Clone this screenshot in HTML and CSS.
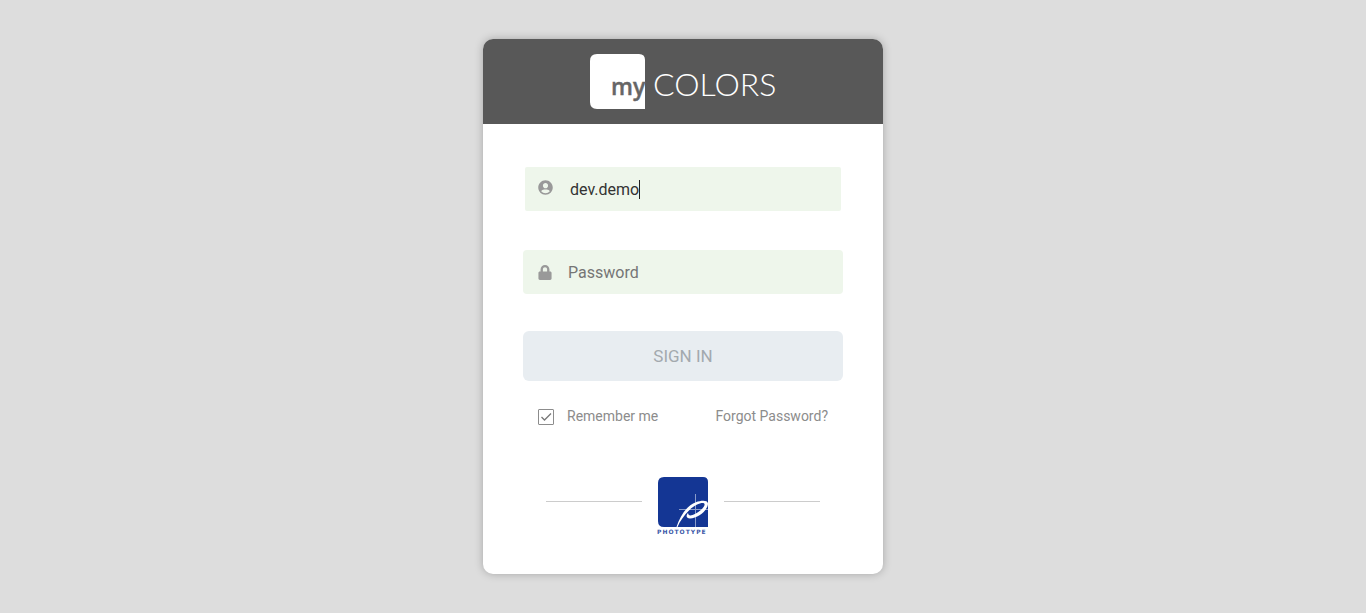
FILE: index.html
```html
<!DOCTYPE html>
<html lang="en">
<head>
<meta charset="utf-8">
<meta name="viewport" content="width=device-width, initial-scale=1">
<title>myColors</title>
<link rel="stylesheet" href="styles.css">
</head>
<body>
<main class="card">
  <header class="card-header">
    <svg class="brand" viewBox="0 0 187 56" role="img" aria-label="my COLORS">
      <path d="M7 0H49Q55 0 55 6V55H7Q0 55 0 48V7Q0 0 7 0Z" fill="#fff"/>
      <text class="brand-my" x="21" y="41">my</text>
      <text class="brand-colors" x="63" y="42">COLORS</text>
    </svg>
  </header>
  <form class="card-body">
    <div class="field field-active">
      <label class="field-icon" for="username" aria-label="Username">
        <svg width="15" height="15" viewBox="0 0 496 512"><path fill="currentColor" d="M248 8C111 8 0 119 0 256s111 248 248 248 248-111 248-248S385 8 248 8zm0 96c48.600 0 88 39.400 88 88s-39.400 88-88 88-88-39.400-88-88 39.400-88 88-88zm0 344c-58.700 0-111.300-26.600-146.500-68.200 18.800-35.400 55.600-59.800 98.500-59.800 2.400 0 4.800.4 7.100 1.100 13 4.200 26.600 6.900 40.900 6.900s28-2.700 40.900-6.900c2.300-.7 4.700-1.100 7.100-1.100 42.900 0 79.700 24.400 98.500 59.800C359.300 421.400 306.700 448 248 448z"/></svg>
      </label>
      <input class="field-input field-input-fit" id="username" type="text" value="dev.demo" autocomplete="off">
      <span class="caret"></span>
    </div>
    <div class="field">
      <label class="field-icon" for="password" aria-label="Password">
        <svg width="14" height="15" viewBox="0 0 448 512"><path fill="currentColor" d="M400 224h-24v-72C376 68.200 307.800 0 224 0S72 68.200 72 152v72H48c-26.500 0-48 21.500-48 48v192c0 26.500 21.500 48 48 48h352c26.500 0 48-21.500 48-48V272c0-26.500-21.500-48-48-48zm-104 0H152v-72c0-39.700 32.300-72 72-72s72 32.300 72 72v72z"/></svg>
      </label>
      <input class="field-input" id="password" type="password" placeholder="Password">
    </div>
    <button class="sign-in" type="submit" disabled>SIGN IN</button>
    <div class="options">
      <label class="remember"><input class="checkbox" type="checkbox" checked>Remember me</label>
      <a class="forgot" href="#">Forgot Password?</a>
    </div>
    <div class="company">
      <svg class="company-logo" viewBox="0 0 50 58" role="img" aria-label="Phototype">
        <path d="M6 0H45Q50 0 50 5V50H6Q0 50 0 44V6Q0 0 6 0Z" fill="#143694"/>
        <path d="M37.500 17V50M21 32.500H50" stroke="#8a9cca" stroke-width="1"/>
        <path d="M18.500 50C22 39 29 28 38 25.200C43 23.400 49.500 22.800 50 26.500C50 33 40 41.500 32 41.500C28.500 41.500 27.500 39 30 36C30.500 38.500 32 39 34.500 38C40.500 36 47.500 30 46.500 27C45.500 24.500 37 27.500 31 33.500C26 38.500 22 44 19.500 50Z" fill="#fff"/>
        <text class="company-name" x="-1" y="57">PHOTOTYPE</text>
      </svg>
    </div>
  </form>
</main>
</body>
</html>
```
FILE: styles.css
```css
* {
  box-sizing: border-box;
}

body {
  margin: 0;
  min-height: 100vh;
  display: flex;
  align-items: center;
  justify-content: center;
  background: #ddd;
  font-family: Roboto, "Liberation Sans", sans-serif;
  color: #8c8c8c;
}

.card {
  width: 100%;
  max-width: 400px;
  background: #fff;
  border-radius: 10px;
  box-shadow: 0 0 8px rgba(0, 0, 0, 0.25);
  overflow: hidden;
}

.card-header {
  display: flex;
  justify-content: center;
  padding: 15px 0 14px;
  background: #585858;
}

.brand {
  width: 187px;
  height: 56px;
  overflow: visible;
}

.brand-my {
  font: 600 23px "Open Sans", sans-serif;
  fill: #666;
  stroke: #666;
  stroke-width: 0.4px;
}

.brand-colors {
  font: 300 32px Lato, sans-serif;
  fill: #fff;
}

.card-body {
  display: flex;
  flex-direction: column;
  padding: 43px 40px 39px;
}

.field {
  display: flex;
  align-items: center;
  height: 44px;
  margin-bottom: 37px;
  padding-left: 15px;
  background: #eef6eb;
  border-radius: 4px;
}

.field-active {
  margin: 0 2px 39px;
  padding-left: 13px;
  border-radius: 2px;
}

.field-icon {
  display: flex;
  width: 30px;
  color: #999;
}

.field-active .field-icon {
  width: 32px;
  padding-bottom: 3px;
}

.field-input {
  flex: 1;
  min-width: 0;
  height: 44px;
  padding: 0;
  border: 0;
  outline: 0;
  background: transparent;
  font: 400 16px Roboto, "Liberation Sans", sans-serif;
  color: #333;
}

.field-input::placeholder {
  color: #757575;
}

.field-input-fit {
  flex: none;
  field-sizing: content;
  caret-color: transparent;
}

.caret {
  width: 1px;
  height: 19px;
  background: #222;
}

.sign-in {
  height: 50px;
  padding-bottom: 2px;
  border: 0;
  border-radius: 6px;
  background: #e8edf1;
  font: 400 17px Roboto, "Liberation Sans", sans-serif;
  color: #a3a9ae;
}

.options {
  display: flex;
  justify-content: space-between;
  align-items: center;
  margin: 25px 15px 50px;
  font-size: 14px;
  line-height: 21px;
}

.remember {
  display: flex;
  align-items: center;
  gap: 13px;
}

.checkbox {
  appearance: none;
  width: 16px;
  height: 16px;
  margin: 1px 0 0;
  border: 1px solid #8c8c8c;
  border-radius: 1px;
}

.checkbox:checked {
  background: url("data:image/svg+xml,%3Csvg xmlns='http://www.w3.org/2000/svg' viewBox='0 0 14 14'%3E%3Cpath d='M2.500 7L5.500 10L12 3.500' fill='none' stroke='%23777' stroke-width='1.300'/%3E%3C/svg%3E") center / 14px no-repeat;
}

.forgot {
  color: inherit;
  text-decoration: none;
}

.company {
  display: flex;
  gap: 16px;
  padding: 0 23px;
}

.company::before,
.company::after {
  content: "";
  flex: 1;
  height: 1px;
  margin-top: 24px;
  background: #ccc;
}

.company-logo {
  width: 50px;
  height: 58px;
  overflow: visible;
}

.company-name {
  font: 700 6px "DejaVu Sans", sans-serif;
  letter-spacing: 1px;
  fill: #3c58a8;
}
```
